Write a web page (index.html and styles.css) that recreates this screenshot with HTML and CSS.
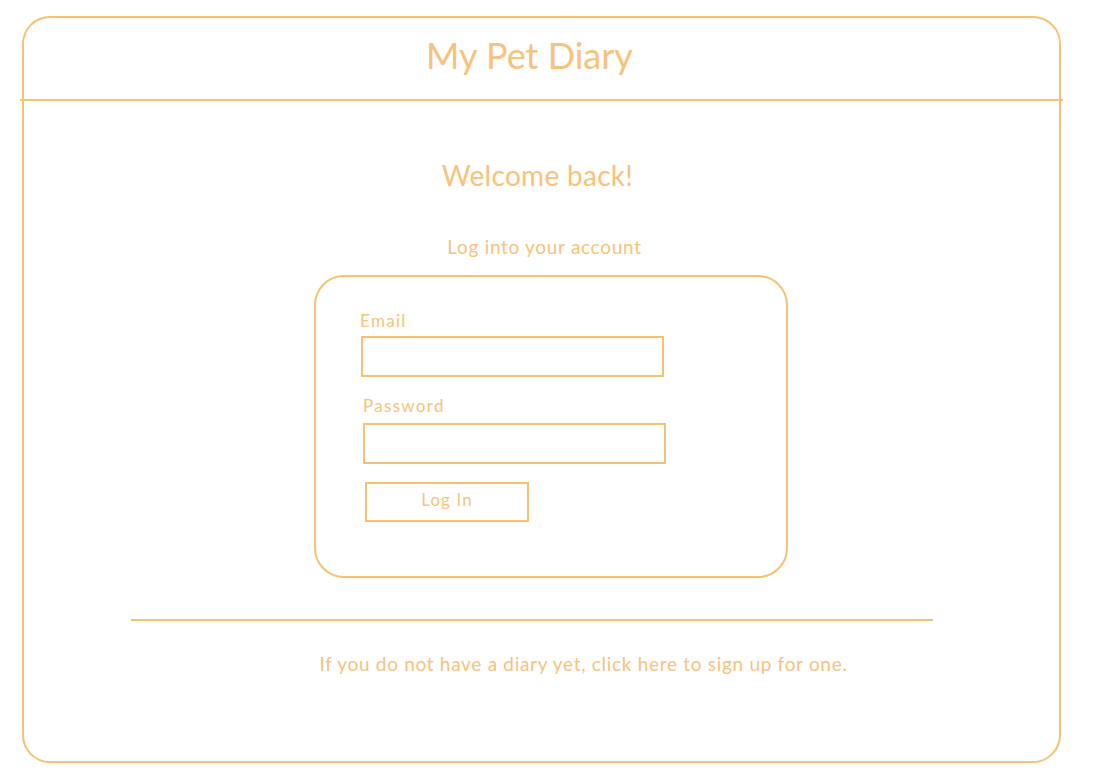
FILE: index.html
```html
<!DOCTYPE html>
<html lang="en">
<head>
<meta charset="utf-8">
<title>My Pet Diary</title>
<link rel="stylesheet" href="styles.css">
</head>
<body>
<div class="frame">
  <header class="header">
    <h1 class="title">My Pet Diary</h1>
  </header>
  <main class="main">
    <h2 class="welcome">Welcome back!</h2>
    <p class="subtitle">Log into your account</p>
    <form class="card">
      <label class="label label-email">Email</label>
      <div class="input input-email"></div>
      <label class="label label-password">Password</label>
      <div class="input input-password"></div>
      <div class="button">Log In</div>
    </form>
    <div class="rule"></div>
    <p class="footer-text">If you do not have a diary yet, click here to sign up for one.</p>
  </main>
</div>
</body>
</html>
```

FILE: styles.css
```css
html, body {
  margin: 0;
  padding: 0;
  background: #ffffff;
}

body {
  font-family: Lato, "Open Sans", sans-serif;
  color: #f7c27c;
}

.frame {
  box-sizing: border-box;
  margin: 16px 0 0 22px;
  width: 1039px;
  height: 747px;
  border: 2px solid #f6c172;
  border-radius: 28px;
  display: flex;
  flex-direction: column;
}

.header {
  box-sizing: border-box;
  height: 83px;
  margin: 0 -4px 0 -4px;
  border-bottom: 2px solid #f6c172;
  display: flex;
  justify-content: center;
  padding-top: 16px;
}

.title {
  margin: 0 0 0 -24px;
  font-size: 36px;
  line-height: 43px;
  font-weight: 400;
}

.main {
  display: flex;
  flex-direction: column;
  align-items: center;
}

.welcome {
  margin: 58px 0 0 -8px;
  font-size: 28px;
  line-height: 32px;
  font-weight: 400;
  letter-spacing: 0.3px;
}

.subtitle {
  margin: 45px 0 0 6px;
  font-size: 19px;
  line-height: 22px;
  letter-spacing: 0.7px;
}

.card {
  box-sizing: border-box;
  margin: 17px 0 0 19px;
  width: 474px;
  height: 303px;
  border: 2px solid #f6c172;
  border-radius: 30px;
  padding: 34px 0 0 44px;
  display: flex;
  flex-direction: column;
  align-items: flex-start;
}

.label {
  font-size: 17px;
  line-height: 19px;
  letter-spacing: 1.3px;
}

.label-password {
  margin: 19px 0 0 3px;
}

.input {
  box-sizing: border-box;
  width: 303px;
  height: 41px;
  border: 2px solid #f6c172;
}

.input-email {
  margin: 6px 0 0 1px;
}

.input-password {
  margin: 8px 0 0 3px;
}

.button {
  box-sizing: border-box;
  margin: 18px 0 0 5px;
  width: 164px;
  height: 40px;
  border: 2px solid #f6c172;
  display: flex;
  align-items: center;
  justify-content: center;
  font-size: 17px;
  letter-spacing: 1.1px;
  padding-bottom: 5px;
}

.rule {
  margin: 41px 0 0 -20px;
  width: 802px;
  height: 2px;
  background: #f6c172;
}

.footer-text {
  margin: 32px 0 0 84px;
  font-size: 19px;
  line-height: 22px;
  letter-spacing: 0.7px;
}
```
